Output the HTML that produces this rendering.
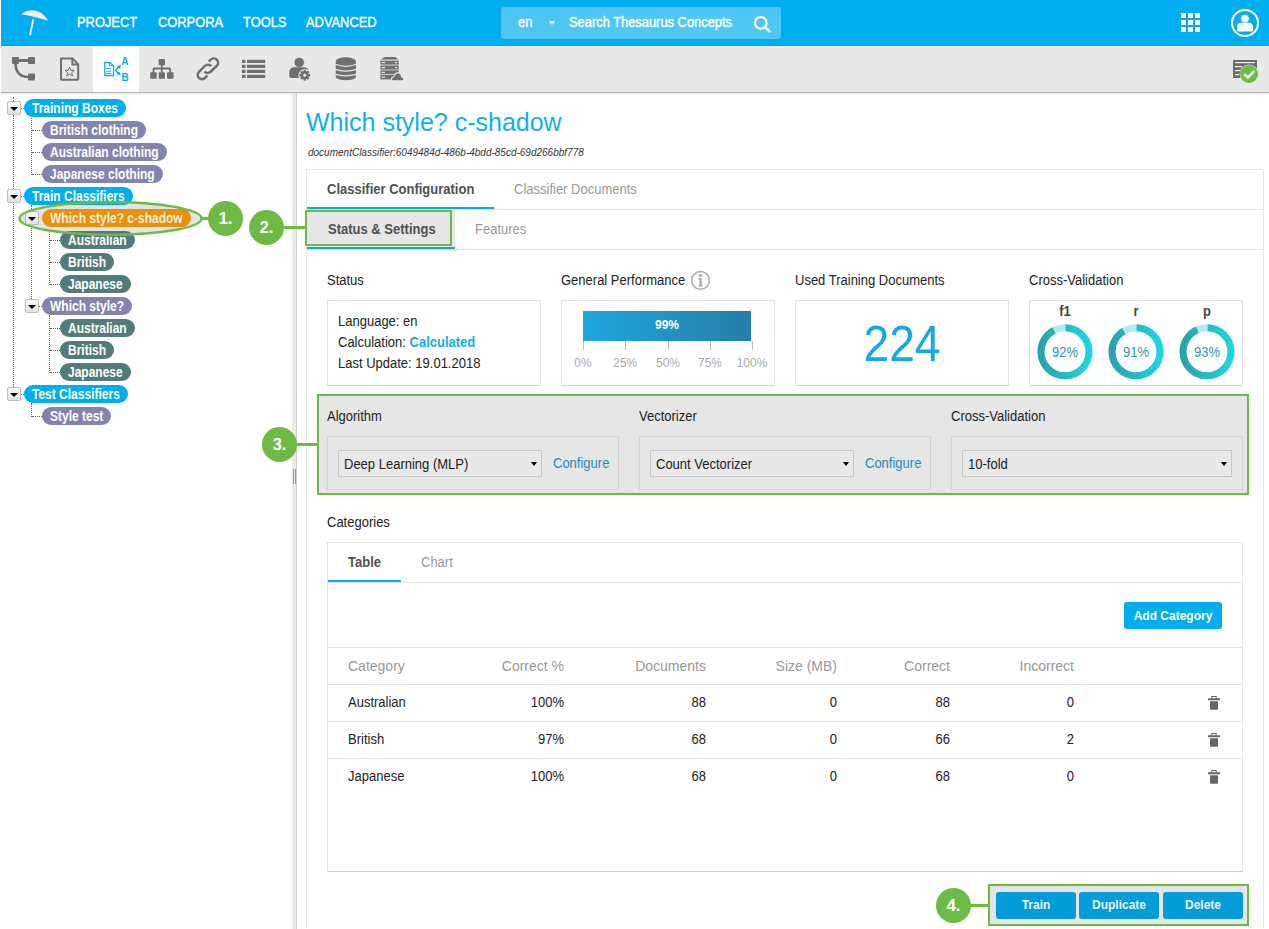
<!DOCTYPE html>
<html><head><meta charset="utf-8">
<style>
*{box-sizing:border-box;margin:0;padding:0}
html,body{width:1269px;height:929px;overflow:hidden;background:#fff;font-family:"Liberation Sans",sans-serif;color:#333}
.a{position:absolute}
.t{line-height:1;white-space:nowrap;transform:scaleY(1.1);transform-origin:0 84.65%}
#hdr{left:0;top:0;width:1269px;height:46px;background:#00aeef}
.nav{position:absolute;top:15px;font-size:14px;line-height:1;color:#fff;white-space:nowrap;-webkit-text-stroke:0.35px #fff;transform:scaleX(0.92);transform-origin:0 0}
#search{left:501px;top:7px;width:280px;height:32px;background:#50c6f3;border-radius:3px}
#tb{left:0;top:46px;width:1269px;height:47px;background:#e8e8e8;border-bottom:1px solid #b5b5b5;box-shadow:0 1px 2px rgba(0,0,0,.10)}
#divider{left:292px;top:93px;width:5px;height:836px;background:#e9e9e9;border-right:1px solid #d0d0d0}
.pill{position:absolute;height:18px;border-radius:9px;color:#fff;font-weight:bold;font-size:12px;line-height:17px;padding:1px 8px 0;white-space:nowrap}
.pill span{display:inline-block;transform:scaleY(1.15);transform-origin:50% 3px}
.pb{background:#00aeef}.pp{background:#8383ad}.pt{background:#537b7b}.po{background:#e8920c;color:#f3ecd8}
.tog{position:absolute;width:14px;height:14px;border:1px solid #bdbdbd;border-radius:2px;background:linear-gradient(#fafafa,#e2e2e2)}
.tog:after{content:"";position:absolute;left:2px;top:5px;border-left:4px solid transparent;border-right:4px solid transparent;border-top:4.5px solid #000}
.vd{position:absolute;width:1px;border-left:1px dotted #666}
.hd{position:absolute;height:1px;border-top:1px dotted #666}
.lbl{font-size:13px;color:#222}
.box{position:absolute;border:1px solid #e3e3e3;border-bottom-color:#d2d2d2;background:#fff}
.gbox{position:absolute;border:1px solid #d3d3d3;background:#e6e6e6}
.sel{position:absolute;height:27px;border:1px solid #c6c6c6;background:#e8e8e8;font-size:13px;color:#222;line-height:25px;padding-left:5px;white-space:nowrap}
.sel span{display:inline-block;line-height:1;transform:scaleY(1.1);transform-origin:0 84.65%;vertical-align:-1px}
.sel:after{content:"";position:absolute;right:4px;top:11px;border-left:3px solid transparent;border-right:3px solid transparent;border-top:4px solid #000}
.cfg{font-size:13px;color:#1b8cc0}
.barl{width:40px;text-align:center;font-size:12px;color:#aaa}
.dl{top:305px;width:40px;text-align:center;font-size:13px;font-weight:bold;color:#444}
.dp{top:346px;width:40px;text-align:center;font-size:13px;color:#2a9ba5}
.th{font-size:14px;color:#999;text-align:right}
.td{font-size:13px;color:#222;text-align:right}
.hl{position:absolute;height:1px;background:#e5e5e5}
.btn{position:absolute;top:892px;height:27px;background:#039bd8;border-radius:3px;color:#e9f2f6;font-weight:bold;font-size:12px;line-height:27px;text-align:center}
.btn span{display:inline-block;transform:scaleY(1.12);transform-origin:50% 17px}
.num{position:absolute;width:35px;height:35px;border-radius:50%;background:#6dbb45;color:#fff;font-weight:bold;font-size:17px;line-height:36px;text-align:center}
.gl{position:absolute;height:3px;background:#6dbb45}
</style></head><body>
<!-- HEADER -->
<div id="hdr" class="a">
  <svg class="a" style="left:0;top:0" width="60" height="46" viewBox="0 0 60 46">
    <path d="M21.3 14.2 C26 9.8 33 9.5 38 11.5 C42.5 13.3 45.8 16.5 48.2 20.8 C39 17.8 30 15.5 21.3 14.2Z" fill="#f3ece8"/>
    <path d="M32.3 19.2 L34.2 19.6 L31 35.2 L29.2 34.8Z" fill="#f3ece8"/>
  </svg>
  <div class="nav" style="left:77px">PROJECT</div>
  <div class="nav" style="left:158px">CORPORA</div>
  <div class="nav" style="left:243px">TOOLS</div>
  <div class="nav" style="left:306px">ADVANCED</div>
  <div id="search" class="a">
    <div class="nav" style="left:17px;top:8px">en</div>
    <div class="a" style="left:48px;top:14px;border-left:3px solid transparent;border-right:3px solid transparent;border-top:4px solid #fff"></div>
    <div class="nav" style="left:68px;top:8px">Search Thesaurus Concepts</div>
    <svg class="a" style="left:251px;top:8px" width="20" height="20" viewBox="0 0 20 20"><circle cx="8.8" cy="7.9" r="5.8" fill="none" stroke="#fff" stroke-width="2.2"/><path d="M13 12.2 L17.5 16.5" stroke="#fff" stroke-width="2.4" stroke-linecap="round"/></svg>
  </div>
  <svg class="a" style="left:1181px;top:13px" width="19" height="19" viewBox="0 0 19 19" fill="#fff">
    <rect x="0" y="0" width="5" height="5"/><rect x="7" y="0" width="5" height="5"/><rect x="14" y="0" width="5" height="5"/>
    <rect x="0" y="7" width="5" height="5"/><rect x="7" y="7" width="5" height="5"/><rect x="14" y="7" width="5" height="5"/>
    <rect x="0" y="14" width="5" height="5"/><rect x="7" y="14" width="5" height="5"/><rect x="14" y="14" width="5" height="5"/>
  </svg>
  <svg class="a" style="left:1230px;top:8px" width="30" height="30" viewBox="0 0 30 30">
    <circle cx="15" cy="15" r="13" fill="none" stroke="#fff" stroke-width="2"/>
    <circle cx="15" cy="10.6" r="4.3" fill="#fff" stroke="#00aeef" stroke-width="0.8"/>
    <path d="M7 22 L7 19 Q7 14.8 11.5 14.8 L18.5 14.8 Q23 14.8 23 19 L23 22 Q23 23.6 21.4 23.6 L8.6 23.6 Q7 23.6 7 22Z" fill="#fff"/>
  </svg>
</div>
<div class="a" style="left:0;top:45px;width:1269px;height:1px;background:#00a7e6"></div>
<div class="a" style="left:0;top:0;width:1px;height:93px;background:#fff;z-index:5"></div>
<!-- TOOLBAR -->
<div id="tb" class="a">
  <div class="a" style="left:0;top:0;width:1269px;height:1px;background:#f4ece9"></div>
  <div class="a" style="left:93px;top:0;width:46px;height:46px;background:#fff"></div>
</div>
<div id="divider" class="a"></div>
<div class="a" style="left:293px;top:469px;width:1px;height:15px;background:#999"></div>
<div class="a" style="left:295px;top:469px;width:1px;height:15px;background:#999"></div>
<svg class="a" style="left:0;top:46px" width="420" height="46" viewBox="0 46 420 46">
  <g fill="#6d6f71" stroke="none">
    <!-- icon1 branch -->
    <rect x="12" y="57" width="7" height="7" rx="1"/>
    <rect x="28" y="57" width="7" height="7" rx="1"/>
    <rect x="28" y="73.5" width="7" height="7" rx="1"/>
  </g>
  <g fill="none" stroke="#6d6f71">
    <path d="M18 60.5 H29" stroke-width="3"/>
    <path d="M15.5 63 Q15.5 77 29 77" stroke-width="2.6"/>
    <!-- icon2 doc star -->
    <path d="M61 58.6 H72.6 L78.2 64.3 V79 Q78.2 79.8 77.4 79.8 H61.8 Q61 79.8 61 79 Z" stroke-width="2"/>
    <path d="M72.3 58.6 V64.5 H78.2" stroke-width="1.8"/>
    <path d="M69.6 67.2 L70.9 70.2 L74.2 70.4 L71.7 72.6 L72.5 75.8 L69.6 74.1 L66.7 75.8 L67.5 72.6 L65 70.4 L68.3 70.2 Z" stroke-width="1"/>
  </g>
  <!-- icon3 classifier (blue) -->
  <g fill="none" stroke="#00aeef">
    <path d="M104.8 62.4 H109.8 L113.6 66 V74.9 Q113.6 75.5 113 75.5 H105.4 Q104.8 75.5 104.8 74.9 Z" stroke-width="1.3"/>
    <path d="M109.3 62.4 V64.8 Q109.3 65.8 110.3 65.8 H113.6" stroke-width="1.1"/>
    <path d="M106.3 68.5 H111.2 M106.3 71.3 H111.2 M106.3 73.5 H111.2" stroke-width="0.9"/>
    <path d="M119 66.5 L115.6 70.2 L118.6 73.6" stroke-width="1.4"/>
  </g>
  <g fill="#00aeef">
    <path d="M116.8 66.6 L121 64.8 L119.9 69Z"/>
    <path d="M116.4 73.8 L120.9 75.6 L119.4 71.4Z"/>
  </g>
  <text x="121.2" y="65.2" font-family="Liberation Sans" font-weight="bold" font-size="10" fill="#00aeef">A</text>
  <text x="121.5" y="80.8" font-family="Liberation Sans" font-weight="bold" font-size="10" fill="#00aeef">B</text>
  <!-- icon4 hierarchy -->
  <g fill="#6d6f71">
    <rect x="158.7" y="59" width="6.3" height="6.2" rx="0.8"/>
    <rect x="150.2" y="72.2" width="6.5" height="6.5" rx="0.8"/>
    <rect x="158.7" y="72.2" width="6.3" height="6.5" rx="0.8"/>
    <rect x="167" y="72.2" width="6.5" height="6.5" rx="0.8"/>
  </g>
  <path d="M161.8 65 V72.5 M153.5 73 V69.3 Q153.5 68.5 154.3 68.5 H169.4 Q170.2 68.5 170.2 69.3 V73" fill="none" stroke="#6d6f71" stroke-width="1.8"/>
  <!-- icon5 link -->
  <g fill="none" stroke="#6d6f71" stroke-width="2.5">
    <path d="M211.25 66.18 A4.3 4.3 0 0 0 204.96 65.96 L198.96 71.86 A4.3 4.3 0 0 0 205.04 77.94 L207.4 75.6"/>
    <path d="M204.46 71.74 A4.3 4.3 0 0 0 210.54 71.74 L216.84 65.74 A4.3 4.3 0 0 0 210.76 59.66 L208.8 61.6"/>
  </g>
  <!-- icon6 list -->
  <g fill="#6d6f71">
    <rect x="242" y="59.8" width="3.5" height="3.2"/><rect x="247" y="59.8" width="18.2" height="3.2"/>
    <rect x="242" y="64.8" width="3.5" height="3.2"/><rect x="247" y="64.8" width="18.2" height="3.2"/>
    <rect x="242" y="69.8" width="3.5" height="3.2"/><rect x="247" y="69.8" width="18.2" height="3.2"/>
    <rect x="242" y="74.8" width="3.5" height="3.2"/><rect x="247" y="74.8" width="18.2" height="3.2"/>
  </g>
  <!-- icon7 user gear -->
  <g fill="#6d6f71">
    <circle cx="299.2" cy="62.4" r="5.2" stroke="#e8e8e8" stroke-width="0.8"/>
    <path d="M289.3 76 V72.5 Q289.3 67.3 294.3 67.3 H304 Q307.8 67.3 308 70.5 L304 78 H291.3 Q289.3 78 289.3 76Z"/>
  </g>
  <g transform="translate(304.8 75.2)">
    <circle r="6.3" fill="#e8e8e8"/>
    <g fill="#6d6f71">
      <circle r="3.9"/>
      <rect x="-1.2" y="-5.4" width="2.4" height="10.8"/>
      <rect x="-1.2" y="-5.4" width="2.4" height="10.8" transform="rotate(45)"/>
      <rect x="-1.2" y="-5.4" width="2.4" height="10.8" transform="rotate(90)"/>
      <rect x="-1.2" y="-5.4" width="2.4" height="10.8" transform="rotate(135)"/>
    </g>
    <circle r="1.6" fill="#e8e8e8"/>
  </g>
  <!-- icon8 database -->
  <path d="M335.7 61.3 A10.1 3.95 0 0 1 355.9 61.3 V77 A10.1 3.2 0 0 1 335.7 77Z" fill="#6d6f71"/>
  <g fill="none" stroke="#e8e8e8" stroke-width="1.2">
    <path d="M335.2 64.3 Q345.8 68.3 356.4 64.3"/>
    <path d="M335.2 69.4 Q345.8 72.8 356.4 69.4"/>
    <path d="M335.2 74.4 Q345.8 77.2 356.4 74.4"/>
  </g>
  <!-- icon9 server cloud -->
  <path d="M384.6 57 H395.3 L398.6 59.8 H380.6Z" fill="#6d6f71"/>
  <rect x="380.5" y="59.8" width="18.2" height="19.5" fill="#a5a6a8"/>
  <rect x="380.5" y="59.8" width="18.2" height="1.1" fill="#c8c9ca"/>
  <g fill="#6d6f71">
    <rect x="380.5" y="61" width="18.2" height="3.1"/>
    <rect x="380.5" y="66" width="18.2" height="3.1"/>
    <rect x="380.5" y="70.8" width="18.2" height="3.1"/>
    <rect x="380.5" y="75" width="18.2" height="4.3"/>
  </g>
  <rect x="380.5" y="74" width="18.2" height="1" fill="#c8c9ca"/>
  <g fill="#e8e8e8">
    <rect x="381.6" y="62" width="3.4" height="1.2"/><rect x="395" y="62" width="2.3" height="1.2"/>
    <rect x="381.6" y="67" width="3.4" height="1.2"/><rect x="395" y="67" width="2.3" height="1.2"/>
    <rect x="381.6" y="71.8" width="3.4" height="1.2"/>
    <rect x="381.6" y="76.5" width="3.4" height="1.2"/>
    <path d="M392.2 81.2 Q390.6 81.2 391 78.5 Q391.6 76.2 393.6 76.6 Q394.3 72.2 398 72.3 Q401.6 72.6 402 76.4 Q404.6 76.9 404.3 79.3 Q404 81.2 402.2 81.2Z"/>
  </g>
  <path d="M393 80.3 Q391.8 80.3 392 78.6 Q392.5 77.2 394.3 77.5 Q394.8 73.3 398 73.4 Q400.9 73.7 401.1 77.2 Q403.4 77.5 403.3 79.2 Q403.1 80.3 401.8 80.3Z" fill="#6d6f71"/>
</svg>
<!-- right toolbar icon -->
<svg class="a" style="left:1230px;top:57px" width="32" height="30" viewBox="1230 57 32 30">
  <rect x="1233" y="60" width="24" height="18" fill="#6b6b6e"/>
  <g fill="#eee">
    <rect x="1235" y="62" width="20" height="1.2"/>
    <rect x="1235" y="66" width="7" height="1.2"/>
    <rect x="1235" y="70" width="5" height="1.2"/>
    <rect x="1235" y="74" width="4" height="1.2"/>
  </g>
  <circle cx="1249" cy="74" r="9.5" fill="#e8e8e8"/>
  <circle cx="1249" cy="74" r="9" fill="#6dbb45"/>
  <path d="M1244.2 74 L1247.8 77.6 L1254.2 71" fill="none" stroke="#eee" stroke-width="2.6"/>
</svg>
<!-- tree lines -->
<div class="vd" style="left:13px;top:97px;height:4px"></div>
<div class="vd" style="left:13px;top:115px;height:274px"></div>
<div class="hd" style="left:21px;top:108px;width:3px"></div>
<div class="hd" style="left:21px;top:196px;width:3px"></div>
<div class="hd" style="left:21px;top:394px;width:3px"></div>
<div class="vd" style="left:31px;top:118px;height:57px"></div>
<div class="hd" style="left:32px;top:130px;width:10px"></div>
<div class="hd" style="left:32px;top:152px;width:10px"></div>
<div class="hd" style="left:32px;top:174px;width:10px"></div>
<div class="vd" style="left:31px;top:205px;height:102px"></div>
<div class="hd" style="left:39px;top:218px;width:3px"></div>
<div class="hd" style="left:39px;top:306px;width:3px"></div>
<div class="vd" style="left:49px;top:227px;height:58px"></div>
<div class="hd" style="left:50px;top:240px;width:10px"></div>
<div class="hd" style="left:50px;top:262px;width:10px"></div>
<div class="hd" style="left:50px;top:284px;width:10px"></div>
<div class="vd" style="left:49px;top:315px;height:58px"></div>
<div class="hd" style="left:50px;top:328px;width:10px"></div>
<div class="hd" style="left:50px;top:350px;width:10px"></div>
<div class="hd" style="left:50px;top:372px;width:10px"></div>
<div class="vd" style="left:31px;top:403px;height:14px"></div>
<div class="hd" style="left:32px;top:416px;width:10px"></div>
<!-- annotation ellipse 1 -->
<svg class="a" style="left:0;top:190px" width="300" height="60" viewBox="0 190 300 60">
  <ellipse cx="110.5" cy="218.4" rx="91" ry="16.4" fill="#e3e3e3"/>
</svg>
<div class="tog" style="left:7px;top:101px"></div>
<div class="pill pb" style="left:24px;top:99px"><span>Training Boxes</span></div>
<div class="pill pp" style="left:42px;top:121px"><span>British clothing</span></div>
<div class="pill pp" style="left:42px;top:143px"><span>Australian clothing</span></div>
<div class="pill pp" style="left:42px;top:165px"><span>Japanese clothing</span></div>
<div class="tog" style="left:7px;top:189px"></div>
<div class="pill pb" style="left:24px;top:187px"><span>Train Classifiers</span></div>
<div class="tog" style="left:25px;top:211px"></div>
<div class="pill po" style="left:42px;top:209px"><span>Which style? c-shadow</span></div>
<div class="pill pt" style="left:60px;top:231px"><span>Australian</span></div>
<div class="pill pt" style="left:60px;top:253px"><span>British</span></div>
<div class="pill pt" style="left:60px;top:275px"><span>Japanese</span></div>
<div class="tog" style="left:25px;top:299px"></div>
<div class="pill pp" style="left:42px;top:297px"><span>Which style?</span></div>
<div class="pill pt" style="left:60px;top:319px"><span>Australian</span></div>
<div class="pill pt" style="left:60px;top:341px"><span>British</span></div>
<div class="pill pt" style="left:60px;top:363px"><span>Japanese</span></div>
<div class="tog" style="left:7px;top:387px"></div>
<div class="pill pb" style="left:24px;top:385px"><span>Test Classifiers</span></div>
<div class="pill pp" style="left:42px;top:407px"><span>Style test</span></div>
<svg class="a" style="left:0;top:190px" width="300" height="60" viewBox="0 190 300 60">
  <ellipse cx="110.5" cy="218.4" rx="91" ry="16.4" fill="none" stroke="#6dbb45" stroke-width="2.3"/>
</svg>
<!-- MAIN -->
<div class="a t" style="left:306px;top:110px;font-size:25px;color:#13aeea;transform:none">Which style? c-shadow</div>
<div class="a t" style="left:308px;top:148px;font-size:10px;font-style:italic;color:#333">documentClassifier:6049484d-486b-4bdd-85cd-69d266bbf778</div>
<div class="a" style="left:306px;top:169px;width:958px;height:759px;border:1px solid #e6e6e6;border-bottom:none"></div>
<!-- tabs -->
<div class="a t" style="left:327px;top:183px;font-size:13px;font-weight:bold;color:#505050">Classifier Configuration</div>
<div class="a t" style="left:514px;top:183px;font-size:13px;color:#999">Classifier Documents</div>
<div class="hl" style="left:307px;top:209px;width:956px"></div>
<div class="a" style="left:307px;top:207px;width:187px;height:2px;background:#00aeef"></div>
<div class="a" style="left:307px;top:210px;width:148px;height:37px;background:#e6e6e6"></div>
<div class="a t" style="left:328px;top:223px;font-size:13px;font-weight:bold;color:#505050">Status &amp; Settings</div>
<div class="a t" style="left:475px;top:223px;font-size:13px;color:#999">Features</div>
<div class="hl" style="left:307px;top:249px;width:956px"></div>
<div class="a" style="left:307px;top:247px;width:148px;height:2px;background:#00aeef"></div>
<!-- green box 2 -->
<div class="a" style="left:305px;top:210px;width:147px;height:36px;border:2px solid #6dbb45"></div>
<!-- status row -->
<div class="a t lbl" style="left:327px;top:274px">Status</div>
<div class="a t lbl" style="left:561px;top:274px">General Performance</div>
<svg class="a" style="left:690px;top:270px" width="21" height="21" viewBox="0 0 21 21"><circle cx="10.5" cy="10.4" r="8.9" fill="none" stroke="#aaa" stroke-width="1.5"/><circle cx="10.5" cy="5.6" r="1.6" fill="#aaa"/><path d="M8.4 8 H11.7 V15.2 H12.8 V16.5 H8.2 V15.2 H9.4 V9.2 H8.4Z" fill="#aaa"/></svg>
<div class="a t lbl" style="left:795px;top:274px">Used Training Documents</div>
<div class="a t lbl" style="left:1029px;top:274px">Cross-Validation</div>
<div class="box" style="left:327px;top:300px;width:214px;height:86px"></div>
<div class="box" style="left:561px;top:300px;width:214px;height:86px"></div>
<div class="box" style="left:795px;top:300px;width:214px;height:86px"></div>
<div class="box" style="left:1029px;top:300px;width:214px;height:86px"></div>
<div class="a t lbl" style="left:338px;top:315px">Language: en</div>
<div class="a t lbl" style="left:338px;top:336px">Calculation: <b style="color:#13aeea">Calculated</b></div>
<div class="a t lbl" style="left:338px;top:357px">Last Update: 19.01.2018</div>
<!-- bar -->
<div class="a" style="left:583px;top:311px;width:168px;height:30px;background:linear-gradient(90deg,#1ea7e0,#267ea8)"></div>
<div class="a t" style="left:583px;top:319px;width:168px;text-align:center;font-size:12px;font-weight:bold;color:#fff">99%</div>
<div class="a" style="left:583px;top:341px;width:1px;height:9px;background:#bbb"></div>
<div class="a" style="left:625px;top:341px;width:1px;height:9px;background:#bbb"></div>
<div class="a" style="left:668px;top:341px;width:1px;height:9px;background:#bbb"></div>
<div class="a" style="left:710px;top:341px;width:1px;height:9px;background:#bbb"></div>
<div class="a" style="left:752px;top:341px;width:1px;height:9px;background:#bbb"></div>
<div class="a t barl" style="left:563px;top:356.5px">0%</div>
<div class="a t barl" style="left:605px;top:356.5px">25%</div>
<div class="a t barl" style="left:648px;top:356.5px">50%</div>
<div class="a t barl" style="left:690px;top:356.5px">75%</div>
<div class="a t barl" style="left:732px;top:356.5px">100%</div>
<!-- 224 -->
<div class="a t" style="left:795px;top:319px;width:214px;text-align:center;font-size:50px;color:#13a8e6;transform:scaleX(0.925);transform-origin:50% 50%">224</div>
<!-- donuts -->
<div class="a t dl" style="left:1045px">f1</div>
<div class="a t dl" style="left:1116px">r</div>
<div class="a t dl" style="left:1187px">p</div>
<svg class="a" style="left:1029px;top:316px" width="214" height="72" viewBox="1029 316 214 72">
  <defs>
    <linearGradient id="dg1065" gradientUnits="userSpaceOnUse" x1="1037.5" y1="0" x2="1092.5" y2="0"><stop offset="0" stop-color="#2aa0a8"/><stop offset="1" stop-color="#1ed7e3"/></linearGradient>
    <linearGradient id="dg1136" gradientUnits="userSpaceOnUse" x1="1108.5" y1="0" x2="1163.5" y2="0"><stop offset="0" stop-color="#2aa0a8"/><stop offset="1" stop-color="#1ed7e3"/></linearGradient>
    <linearGradient id="dg1207" gradientUnits="userSpaceOnUse" x1="1179.5" y1="0" x2="1234.5" y2="0"><stop offset="0" stop-color="#2aa0a8"/><stop offset="1" stop-color="#1ed7e3"/></linearGradient>
  </defs>
  <circle cx="1065" cy="351.7" r="24" fill="none" stroke="#b4e9ef" stroke-width="7"/>
  <circle cx="1065" cy="351.7" r="24" fill="none" stroke="url(#dg1065)" stroke-width="7" stroke-dasharray="138.73 12.06" stroke-dashoffset="37.70"/>
  <circle cx="1136" cy="351.7" r="24" fill="none" stroke="#b4e9ef" stroke-width="7"/>
  <circle cx="1136" cy="351.7" r="24" fill="none" stroke="url(#dg1136)" stroke-width="7" stroke-dasharray="137.22 13.57" stroke-dashoffset="37.70"/>
  <circle cx="1207" cy="351.7" r="24" fill="none" stroke="#b4e9ef" stroke-width="7"/>
  <circle cx="1207" cy="351.7" r="24" fill="none" stroke="url(#dg1207)" stroke-width="7" stroke-dasharray="140.24 10.56" stroke-dashoffset="37.70"/>
</svg>
<div class="a t dp" style="left:1045px">92%</div>
<div class="a t dp" style="left:1116px">91%</div>
<div class="a t dp" style="left:1187px">93%</div>
<!-- algorithm section -->
<div class="a" style="left:317px;top:394px;width:932px;height:101px;background:#e6e6e6;border:2px solid #6dbb45"></div>
<div class="a t lbl" style="left:327px;top:410px">Algorithm</div>
<div class="a t lbl" style="left:639px;top:410px">Vectorizer</div>
<div class="a t lbl" style="left:951px;top:410px">Cross-Validation</div>
<div class="gbox" style="left:327px;top:436px;width:292px;height:54px"></div>
<div class="gbox" style="left:639px;top:436px;width:292px;height:54px"></div>
<div class="gbox" style="left:951px;top:436px;width:292px;height:54px"></div>
<div class="sel" style="left:338px;top:450px;width:204px"><span>Deep Learning (MLP)</span></div>
<div class="a t cfg" style="left:553px;top:457px">Configure</div>
<div class="sel" style="left:650px;top:450px;width:204px"><span>Count Vectorizer</span></div>
<div class="a t cfg" style="left:865px;top:457px">Configure</div>
<div class="sel" style="left:962px;top:450px;width:270px"><span>10-fold</span></div>
<!-- categories -->
<div class="a t lbl" style="left:327px;top:516px">Categories</div>
<div class="a" style="left:327px;top:542px;width:916px;height:330px;border:1px solid #e6e6e6;border-bottom-color:#d0d0d0"></div>
<div class="a t" style="left:348px;top:556px;font-size:13px;font-weight:bold;color:#505050">Table</div>
<div class="a t" style="left:421px;top:556px;font-size:13px;color:#999">Chart</div>
<div class="hl" style="left:328px;top:582px;width:914px"></div>
<div class="a" style="left:328px;top:580px;width:73px;height:2px;background:#00aeef"></div>
<div class="a" style="left:1124px;top:602px;width:98px;height:27px;background:#00aeef;border-radius:3px"></div>
<div class="a t" style="left:1124px;top:610px;width:98px;text-align:center;font-size:12px;font-weight:bold;color:#fff">Add Category</div>
<div class="hl" style="left:328px;top:647px;width:914px"></div>
<div class="a t th" style="left:348px;top:659px;text-align:left">Category</div>
<div class="a t th" style="left:464px;top:659px;width:100px">Correct %</div>
<div class="a t th" style="left:606px;top:659px;width:100px">Documents</div>
<div class="a t th" style="left:737px;top:659px;width:100px">Size (MB)</div>
<div class="a t th" style="left:850px;top:659px;width:100px">Correct</div>
<div class="a t th" style="left:974px;top:659px;width:100px">Incorrect</div>
<div class="hl" style="left:328px;top:684px;width:914px"></div>
<div class="hl" style="left:328px;top:721px;width:914px"></div>
<div class="hl" style="left:328px;top:758px;width:914px"></div>
<div class="a t td" style="left:348px;top:696px;text-align:left">Australian</div>
<div class="a t td" style="left:464px;top:696px;width:100px">100%</div>
<div class="a t td" style="left:606px;top:696px;width:100px">88</div>
<div class="a t td" style="left:737px;top:696px;width:100px">0</div>
<div class="a t td" style="left:850px;top:696px;width:100px">88</div>
<div class="a t td" style="left:974px;top:696px;width:100px">0</div>
<svg class="a" style="left:1207px;top:696px" width="14" height="15" viewBox="0 0 14 15"><path d="M4.3 0 H9.7 V2.3 H13 V4.2 H1 V2.3 H4.3Z M5.4 1.1 V2.3 H8.6 V1.1Z" fill="#666" fill-rule="evenodd"/><path d="M3 5.3 H11 V12.7 Q11 13.7 10 13.7 H4 Q3 13.7 3 12.7Z" fill="#666"/></svg>
<div class="a t td" style="left:348px;top:733px;text-align:left">British</div>
<div class="a t td" style="left:464px;top:733px;width:100px">97%</div>
<div class="a t td" style="left:606px;top:733px;width:100px">68</div>
<div class="a t td" style="left:737px;top:733px;width:100px">0</div>
<div class="a t td" style="left:850px;top:733px;width:100px">66</div>
<div class="a t td" style="left:974px;top:733px;width:100px">2</div>
<svg class="a" style="left:1207px;top:733px" width="14" height="15" viewBox="0 0 14 15"><path d="M4.3 0 H9.7 V2.3 H13 V4.2 H1 V2.3 H4.3Z M5.4 1.1 V2.3 H8.6 V1.1Z" fill="#666" fill-rule="evenodd"/><path d="M3 5.3 H11 V12.7 Q11 13.7 10 13.7 H4 Q3 13.7 3 12.7Z" fill="#666"/></svg>
<div class="a t td" style="left:348px;top:770px;text-align:left">Japanese</div>
<div class="a t td" style="left:464px;top:770px;width:100px">100%</div>
<div class="a t td" style="left:606px;top:770px;width:100px">68</div>
<div class="a t td" style="left:737px;top:770px;width:100px">0</div>
<div class="a t td" style="left:850px;top:770px;width:100px">68</div>
<div class="a t td" style="left:974px;top:770px;width:100px">0</div>
<svg class="a" style="left:1207px;top:770px" width="14" height="15" viewBox="0 0 14 15"><path d="M4.3 0 H9.7 V2.3 H13 V4.2 H1 V2.3 H4.3Z M5.4 1.1 V2.3 H8.6 V1.1Z" fill="#666" fill-rule="evenodd"/><path d="M3 5.3 H11 V12.7 Q11 13.7 10 13.7 H4 Q3 13.7 3 12.7Z" fill="#666"/></svg>
<!-- bottom buttons -->
<div class="a" style="left:988px;top:884px;width:261px;height:42px;background:#e6e6e6;border:2px solid #6dbb45"></div>
<div class="btn" style="left:996px;width:80px"><span>Train</span></div>
<div class="btn" style="left:1079px;width:80px"><span>Duplicate</span></div>
<div class="btn" style="left:1163px;width:80px"><span>Delete</span></div>
<!-- annotation circles -->
<div class="gl" style="left:200px;top:217px;width:12px"></div>
<div class="num" style="left:208px;top:201px">1.</div>
<div class="gl" style="left:282px;top:226px;width:25px"></div>
<div class="num" style="left:249px;top:210px">2.</div>
<div class="gl" style="left:295px;top:443px;width:24px"></div>
<div class="num" style="left:262px;top:427px">3.</div>
<div class="gl" style="left:968px;top:904px;width:22px"></div>
<div class="num" style="left:936px;top:888px">4.</div>
</body></html>
